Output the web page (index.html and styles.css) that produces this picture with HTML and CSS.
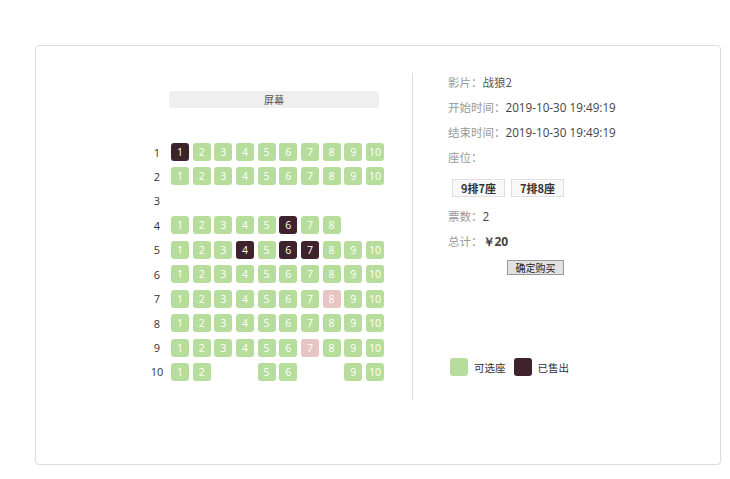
FILE: index.html
```html
<!DOCTYPE html>
<html lang="zh">
<head>
<meta charset="utf-8">
<title>选座</title>
<link rel="stylesheet" href="styles.css">
</head>
<body>
<div class="card">
  <div class="hall">
    <div class="screen">屏幕</div>
    <div class="seats">
      <div class="row"><span class="rl">1</span><span class="seat sold">1</span><span class="seat">2</span><span class="seat">3</span><span class="seat">4</span><span class="seat">5</span><span class="seat">6</span><span class="seat">7</span><span class="seat">8</span><span class="seat">9</span><span class="seat">10</span></div>
      <div class="row"><span class="rl">2</span><span class="seat">1</span><span class="seat">2</span><span class="seat">3</span><span class="seat">4</span><span class="seat">5</span><span class="seat">6</span><span class="seat">7</span><span class="seat">8</span><span class="seat">9</span><span class="seat">10</span></div>
      <div class="row"><span class="rl">3</span></div>
      <div class="row"><span class="rl">4</span><span class="seat">1</span><span class="seat">2</span><span class="seat">3</span><span class="seat">4</span><span class="seat">5</span><span class="seat sold">6</span><span class="seat">7</span><span class="seat">8</span></div>
      <div class="row"><span class="rl">5</span><span class="seat">1</span><span class="seat">2</span><span class="seat">3</span><span class="seat sold">4</span><span class="seat">5</span><span class="seat sold">6</span><span class="seat sold">7</span><span class="seat">8</span><span class="seat">9</span><span class="seat">10</span></div>
      <div class="row"><span class="rl">6</span><span class="seat">1</span><span class="seat">2</span><span class="seat">3</span><span class="seat">4</span><span class="seat">5</span><span class="seat">6</span><span class="seat">7</span><span class="seat">8</span><span class="seat">9</span><span class="seat">10</span></div>
      <div class="row"><span class="rl">7</span><span class="seat">1</span><span class="seat">2</span><span class="seat">3</span><span class="seat">4</span><span class="seat">5</span><span class="seat">6</span><span class="seat">7</span><span class="seat picked">8</span><span class="seat">9</span><span class="seat">10</span></div>
      <div class="row"><span class="rl">8</span><span class="seat">1</span><span class="seat">2</span><span class="seat">3</span><span class="seat">4</span><span class="seat">5</span><span class="seat">6</span><span class="seat">7</span><span class="seat">8</span><span class="seat">9</span><span class="seat">10</span></div>
      <div class="row"><span class="rl">9</span><span class="seat">1</span><span class="seat">2</span><span class="seat">3</span><span class="seat">4</span><span class="seat">5</span><span class="seat">6</span><span class="seat picked">7</span><span class="seat">8</span><span class="seat">9</span><span class="seat">10</span></div>
      <div class="row"><span class="rl">10</span><span class="seat">1</span><span class="seat">2</span><span class="seat empty"></span><span class="seat empty"></span><span class="seat">5</span><span class="seat">6</span><span class="seat empty"></span><span class="seat empty"></span><span class="seat">9</span><span class="seat">10</span></div>
    </div>
  </div>
  <div class="info">
    <div class="line"><span class="lab">影片：</span><span class="val">战狼2</span></div>
    <div class="line"><span class="lab">开始时间：</span><span class="val num">2019-10-30 19:49:19</span></div>
    <div class="line"><span class="lab">结束时间：</span><span class="val num">2019-10-30 19:49:19</span></div>
    <div class="line"><span class="lab">座位：</span></div>
    <div class="tags"><span class="tag">9排7座</span><span class="tag">7排8座</span></div>
    <div class="line gap"><span class="lab">票数：</span><span class="val num">2</span></div>
    <div class="line"><span class="lab">总计：</span><span class="val price">￥20</span></div>
    <button class="buy">确定购买</button>
    <div class="legend">
      <span class="sw green"></span><span class="lt">可选座</span>
      <span class="sw dark"></span><span class="lt">已售出</span>
    </div>
  </div>
</div>
</body>
</html>
```

FILE: styles.css
```css
html, body {
  margin: 0;
  padding: 0;
  background: #fff;
}
body {
  padding: 45px 0 0 35px;
  font-family: "Noto Sans CJK SC", "Noto Sans", sans-serif;
}
.card {
  box-sizing: border-box;
  width: 686px;
  height: 420px;
  border: 1px solid #dcdcdc;
  border-radius: 4px;
  box-shadow: 0 1px 2px rgba(0,0,0,0.05);
  display: flex;
  padding-top: 24px;
}
.hall {
  box-sizing: border-box;
  width: 377px;
  height: 327px;
  margin-top: 3px;
  border-right: 1px solid #dcdcdc;
  padding-top: 18px;
}
.screen {
  margin-left: 133px;
  width: 210px;
  height: 17px;
  background: #efefef;
  border-radius: 3px;
  font-size: 10px;
  line-height: 17px;
  text-align: center;
  color: #555;
}
.seats {
  margin-top: 35px;
  margin-left: 112px;
  display: flex;
  flex-direction: column;
  gap: 6.45px;
}
.row {
  display: flex;
  height: 18px;
  align-items: center;
}
.rl {
  width: 18px;
  margin-right: 5px;
  text-align: center;
  font-family: "Open Sans", sans-serif;
  font-size: 11px;
  color: #333;
}
.seat {
  width: 18px;
  height: 18px;
  margin-right: 3.67px;
  border-radius: 3px;
  background: #b7dd9d;
  color: #fff;
  font-family: "Open Sans", sans-serif;
  font-size: 10.5px;
  line-height: 18px;
  text-align: center;
}
.seat.sold { background: #3e222c; }
.seat.picked { background: #e7c5c2; }
.seat.empty { background: transparent; }
.info {
  padding-left: 35px;
  display: flex;
  flex-direction: column;
  align-items: flex-start;
}
.line {
  height: 25px;
  line-height: 25px;
  font-size: 11.5px;
}
.lab { color: #999; }
.val { color: #555; }
.num {
  font-family: "Open Sans", sans-serif;
  font-size: 11.7px;
  color: #444;
}
.price {
  font-family: "Open Sans", sans-serif;
  font-weight: 700;
  font-size: 12px;
  color: #444;
}
.tags {
  display: flex;
  gap: 6px;
  margin-top: 9px;
  margin-left: 4px;
}
.tag {
  box-sizing: border-box;
  height: 18px;
  padding: 0 8px;
  border: 1px solid #e0e0e0;
  background: #f8f8f8;
  font-size: 11px;
  font-weight: 700;
  line-height: 16px;
  color: #333;
}
.line.gap { margin-top: 6.5px; }
.buy {
  box-sizing: border-box;
  margin-top: 6.5px;
  margin-left: 59px;
  width: 57px;
  height: 15px;
  padding: 0;
  border: 1px solid #999;
  background: #e1e1e1;
  font-family: "Noto Sans CJK SC", sans-serif;
  font-size: 10px;
  line-height: 13px;
  color: #222;
}
.legend {
  margin-top: 83px;
  margin-left: 2px;
  display: flex;
  align-items: center;
  font-size: 10.5px;
  color: #333;
}
.sw {
  width: 18px;
  height: 18px;
  border-radius: 3px;
}
.sw.green { background: #b7dd9d; }
.sw.dark { background: #3e222c; }
.lt { margin-left: 6px; margin-right: 8px; }
```
